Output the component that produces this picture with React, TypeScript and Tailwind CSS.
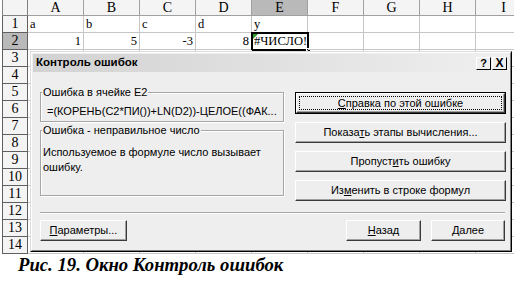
import React from 'react';

const cols = ['A', 'B', 'C', 'D', 'E', 'F', 'G', 'H', 'I'];
const rows = Array.from({ length: 14 }, (_, i) => i + 1);

const cellText: Record<string, { text: string; right?: boolean }> = {
  A1: { text: 'a' },
  B1: { text: 'b' },
  C1: { text: 'c' },
  D1: { text: 'd' },
  E1: { text: 'y' },
  A2: { text: '1', right: true },
  B2: { text: '5', right: true },
  C2: { text: '-3', right: true },
  D2: { text: '8', right: true },
  E2: { text: '#ЧИСЛО!' },
};

const sans = "font-['Liberation_Sans',Arial,sans-serif]";

const btn =
  'h-[21px] flex items-center justify-center text-[11px] text-black bg-[#eeeeee] border border-t-white border-l-white border-r-[#3a3a3a] border-b-[#3a3a3a] shadow-[inset_-1px_-1px_0_#a0a0a0]';

const Sheet = () => (
  <div className="pl-[2px] font-['Liberation_Serif','Times_New_Roman',serif] text-[12.5px] text-black bg-white">
    {/* column headers */}
    <div className="flex h-[16px]">
      <div className="w-[26px] shrink-0 border-l border-r border-b border-[#808080] bg-[#f4f4f4]" />
      {cols.map(c => (
        <div
          key={c}
          className={`w-[56px] shrink-0 border-r border-b border-[#a0a0a0] flex items-center justify-center text-[14px] leading-none ${
            c === 'E' ? 'bg-[#b9b9b9]' : 'bg-[#f4f4f4]'
          }`}
        >
          {c}
        </div>
      ))}
    </div>
    {rows.map(r => (
      <div key={r} className="flex h-[17px]">
        <div
          className={`w-[26px] shrink-0 border-l border-r border-b border-[#606060] flex items-center justify-center text-[14px] leading-none ${
            r === 2 ? 'bg-[#b9b9b9]' : 'bg-[#f4f4f4]'
          }`}
        >
          {r}
        </div>
        {cols.map(c => {
          const v = cellText[c + r];
          const selected = c === 'E' && r === 2;
          return (
            <div
              key={c}
              className={`relative w-[56px] shrink-0 border-r border-b border-[#c6c6c6] flex items-center px-[2px] leading-none whitespace-nowrap ${
                v?.right ? 'justify-end' : 'justify-start'
              }`}
            >
              {v?.text}
              {selected && (
                <>
                  <div className="absolute -left-px -top-px -right-[2px] -bottom-[2px] border-2 border-black" />
                  <div className="absolute left-[1px] top-[1px] w-0 h-0 border-t-[5px] border-t-[#2e9b2e] border-r-[5px] border-r-transparent" />
                  <div className="absolute -right-[4px] -bottom-[4px] w-[5px] h-[5px] bg-black border border-white" />
                </>
              )}
            </div>
          );
        })}
      </div>
    ))}
  </div>
);

const GroupBox = ({ label, className, children }: { label: string; className: string; children: React.ReactNode }) => (
  <div className={`relative border border-[#a6a6a6] shadow-[inset_1px_1px_0_#fff,1px_1px_0_#fff] ${className}`}>
    <span className="absolute -top-[8px] left-[1px] bg-[#eeeeee] px-[1px] text-[11px] leading-[14px] text-black">
      {label}
    </span>
    {children}
  </div>
);

const Dialog = () => (
  <div className={`absolute left-[30px] top-[51px] w-[482px] h-[201px] border border-t-[#dcdcdc] border-l-[#dcdcdc] border-r-black border-b-black ${sans}`}>
    <div className="h-full flex flex-col bg-[#eeeeee] border border-t-white border-l-white border-r-[#808080] border-b-[#808080]">
      {/* title bar */}
      <div className="mx-[1px] mt-[1px] h-[18px] flex items-center justify-between pl-[3px] pr-[2px] bg-linear-to-r from-[#d2d2d2] to-[#efefef]">
        <span className="text-[11.5px] font-bold text-black">Контроль ошибок</span>
        <div className="flex">
          <div className="w-[15px] h-[13px] flex items-center justify-center text-[11px] font-bold leading-none border border-t-white border-l-white border-r-black border-b-black bg-[#eeeeee]">
            ?
          </div>
          <div className="ml-[1px] w-[15px] h-[13px] flex items-center justify-center text-[12px] font-bold leading-none border border-t-white border-l-white border-r-black border-b-black bg-[#eeeeee]">
            X
          </div>
        </div>
      </div>

      <div className="flex gap-[11px] pl-[8px] pt-[20px]">
        <div className="w-[244px] flex flex-col gap-[8px]">
          <GroupBox label="Ошибка в ячейке E2" className="h-[30px]">
            <div className="pt-[11px] pl-[6px] pr-[2px] text-[11px] leading-[14px] text-black whitespace-nowrap overflow-hidden">
              =(КОРЕНЬ(C2*ПИ())+LN(D2))-ЦЕЛОЕ((ФАК...
            </div>
          </GroupBox>
          <GroupBox label="Ошибка - неправильное число" className="h-[66px]">
            <div className="pt-[14px] pl-[2px] text-[11px] leading-[15px] text-black">
              Используемое в формуле число вызывает
              <br />
              ошибку.
            </div>
          </GroupBox>
        </div>

        <div className="w-[211px] flex flex-col gap-[8px]">
          <div className="relative h-[22px] border border-black">
            <div className={`${btn} h-full`}>
              <span>
                <u>С</u>правка по этой ошибке
              </span>
            </div>
            <div className="absolute inset-[3px] border border-dotted border-black" />
          </div>
          <div className={btn}>
            <span>
              Показа<u>т</u>ь этапы вычисления...
            </span>
          </div>
          <div className={btn}>
            <span>
              Пропуст<u>и</u>ть ошибку
            </span>
          </div>
          <div className={btn}>
            <span>
              Из<u>м</u>енить в строке формул
            </span>
          </div>
        </div>
      </div>

      {/* separator */}
      <div className="mt-[11px] ml-[8px] mr-[5px] h-[2px] border-t border-t-[#a6a6a6] border-b border-b-white" />

      <div className="flex items-center pl-[8px] pr-[5px] pt-[6px]">
        <div className={`${btn} w-[87px]`}>
          <span>
            <u>П</u>араметры...
          </span>
        </div>
        <div className="flex-1" />
        <div className={`${btn} w-[75px]`}>
          <span>
            <u>Н</u>азад
          </span>
        </div>
        <div className={`${btn} w-[74px] ml-[10px]`}>
          <span>
            <u>Д</u>алее
          </span>
        </div>
      </div>
    </div>
  </div>
);

export default function App() {
  return (
    <div className="w-[514px] h-[292px] overflow-hidden bg-white">
      <div className="relative">
        <Sheet />
        <Dialog />
      </div>
      <div className="pl-[18px] font-['Liberation_Serif','Times_New_Roman',serif] italic font-bold text-[18.7px] leading-[22px] text-black">
        Рис. 19. Окно Контроль ошибок
      </div>
    </div>
  );
}
